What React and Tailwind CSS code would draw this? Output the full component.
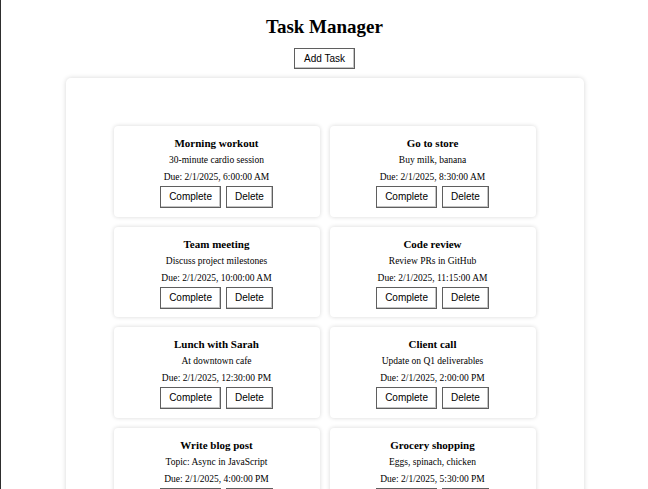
import { useState } from 'react';

const initialTasks = [
  { id: 1, title: 'Morning workout', description: '30-minute cardio session', due: 'Due: 2/1/2025, 6:00:00 AM' },
  { id: 2, title: 'Go to store', description: 'Buy milk, banana', due: 'Due: 2/1/2025, 8:30:00 AM' },
  { id: 3, title: 'Team meeting', description: 'Discuss project milestones', due: 'Due: 2/1/2025, 10:00:00 AM' },
  { id: 4, title: 'Code review', description: 'Review PRs in GitHub', due: 'Due: 2/1/2025, 11:15:00 AM' },
  { id: 5, title: 'Lunch with Sarah', description: 'At downtown cafe', due: 'Due: 2/1/2025, 12:30:00 PM' },
  { id: 6, title: 'Client call', description: 'Update on Q1 deliverables', due: 'Due: 2/1/2025, 2:00:00 PM' },
  { id: 7, title: 'Write blog post', description: 'Topic: Async in JavaScript', due: 'Due: 2/1/2025, 4:00:00 PM' },
  { id: 8, title: 'Grocery shopping', description: 'Eggs, spinach, chicken', due: 'Due: 2/1/2025, 5:30:00 PM' },
];

const btn =
  "h-[22px] border border-[#5f5f5f] bg-white px-[8px] font-['Liberation_Sans',Arial,sans-serif] text-[10px] leading-none text-black shadow-[inset_-1px_-1px_0_#c4c4c4]";

const TaskCard = ({ task, onDelete }) => (
  <div className="flex h-[90.5px] flex-col items-center rounded-[4px] bg-white pt-[10px] shadow-[0_0_4px_rgba(0,0,0,0.16)]">
    <h3 className="text-[11px] font-bold leading-[14px]">{task.title}</h3>
    <p className="mt-[3px] text-[9.5px] leading-[14px]">{task.description}</p>
    <p className="mt-[3px] text-[9.5px] leading-[14px]">{task.due}</p>
    <div className="mt-[2px] flex gap-[5px]">
      <button className={btn}>Complete</button>
      <button className={btn} onClick={() => onDelete(task.id)}>
        Delete
      </button>
    </div>
  </div>
);

export default function App() {
  const [tasks, setTasks] = useState(initialTasks);

  const handleDelete = (id) => {
    setTasks(tasks.filter((t) => t.id !== id));
  };

  return (
    <div className="min-h-screen border-l border-[#2e2e2e] bg-white font-['Liberation_Serif','Times_New_Roman',serif] text-black">
      <div className="flex flex-col items-center pt-4">
        <h1 className="text-[19px] font-bold leading-[22px]">Task Manager</h1>
        <button className="mt-[10px] h-[21px] border border-[#5f5f5f] bg-white px-[9px] font-['Liberation_Sans',Arial,sans-serif] text-[10px] leading-none shadow-[inset_-1px_-1px_0_#c4c4c4]">
          Add Task
        </button>
        <div className="mt-[9px] w-[518px] rounded-[5px] bg-white p-12 shadow-[0_0_5px_rgba(0,0,0,0.16)]">
          <div className="grid grid-cols-2 gap-[10px]">
            {tasks.map((task) => (
              <TaskCard key={task.id} task={task} onDelete={handleDelete} />
            ))}
          </div>
        </div>
      </div>
    </div>
  );
}
